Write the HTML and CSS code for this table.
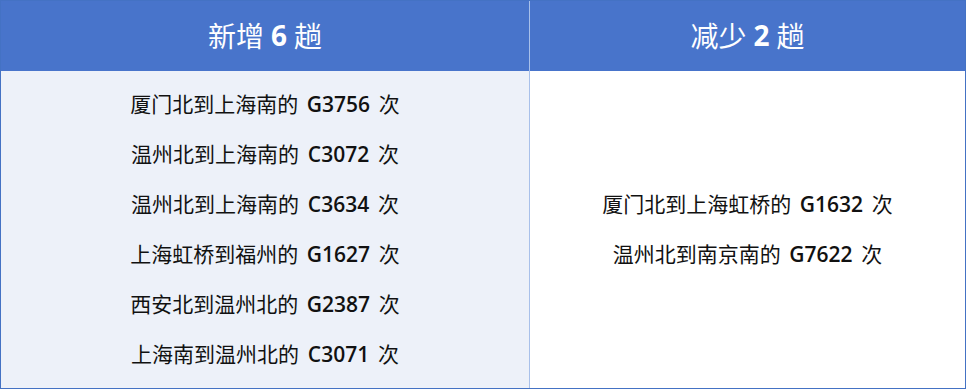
FILE: index.html
```html
<!DOCTYPE html>
<html lang="zh">
<head>
<meta charset="utf-8">
<link rel="stylesheet" href="styles.css">
</head>
<body>
<div class="table">
  <div class="head head-left">新增 <b>6</b> 趟</div>
  <div class="head head-right">减少 <b>2</b> 趟</div>
  <div class="cell cell-left">
    <p>厦门北到上海南的 <b>G3756</b> 次</p>
    <p>温州北到上海南的 <b>C3072</b> 次</p>
    <p>温州北到上海南的 <b>C3634</b> 次</p>
    <p>上海虹桥到福州的 <b>G1627</b> 次</p>
    <p>西安北到温州北的 <b>G2387</b> 次</p>
    <p>上海南到温州北的 <b>C3071</b> 次</p>
  </div>
  <div class="cell cell-right">
    <p>厦门北到上海虹桥的 <b>G1632</b> 次</p>
    <p>温州北到南京南的 <b>G7622</b> 次</p>
  </div>
</div>
</body>
</html>
```
FILE: styles.css
```css
html, body {
  margin: 0;
  padding: 0;
  background: #ffffff;
}
.table {
  width: 966px;
  height: 389px;
  box-sizing: border-box;
  border: 1px solid #4472c4;
  display: grid;
  grid-template-columns: 529px 1fr;
  grid-template-rows: 70px 1fr;
  font-family: "Noto Sans CJK SC", "Noto Sans", sans-serif;
  color: #111111;
}
.head {
  background: #4874cb;
  color: #ffffff;
  font-size: 28px;
  display: flex;
  align-items: center;
  justify-content: center;
  padding-bottom: 2px;
}
.head b {
  font-family: "Open Sans", "Noto Sans", sans-serif;
  font-weight: 700;
  margin: 0 7px;
}
.head-left {
  border-right: 1px solid #a8c0ea;
}
.cell {
  display: flex;
  flex-direction: column;
  justify-content: center;
  align-items: center;
  padding-bottom: 3px;
}
.cell-left {
  background: #edf1f9;
  border-right: 1px solid #a8c0ea;
}
.cell p {
  margin: 0;
  height: 50px;
  line-height: 50px;
  font-size: 21px;
  font-weight: 400;
}
.cell b {
  font-family: "Open Sans", "Noto Sans", sans-serif;
  font-weight: 600;
  margin: 0 4px;
}
```
